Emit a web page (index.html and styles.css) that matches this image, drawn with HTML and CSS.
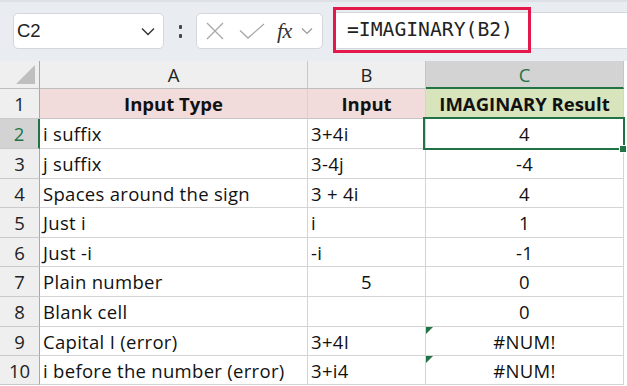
FILE: index.html
```html
<!DOCTYPE html>
<html>
<head>
<meta charset="utf-8">
<link rel="stylesheet" href="styles.css">
</head>
<body>
<div class="toolbar">
  <div class="namebox">
    <span class="nb-text">C2</span>
    <svg class="nb-chev" width="14" height="9" viewBox="0 0 14 9"><path d="M1 1.5 L7 7.5 L13 1.5" fill="none" stroke="#333" stroke-width="1.4"/></svg>
  </div>
  <div class="dots"><span></span><span></span></div>
  <div class="fxbox">
    <svg width="18" height="18" viewBox="0 0 18 18"><path d="M1 1 L17 17 M17 1 L1 17" stroke="#a8a8a8" stroke-width="1.3" fill="none"/></svg>
    <svg width="26" height="16" viewBox="0 0 26 16"><path d="M1 7.5 L9 15 L25 1" stroke="#a8a8a8" stroke-width="1.3" fill="none"/></svg>
    <span class="fx">fx</span>
    <svg width="12" height="8" viewBox="0 0 12 8"><path d="M1 1.5 L6 6.5 L11 1.5" fill="none" stroke="#999" stroke-width="1.2"/></svg>
  </div>
  <div class="formula">
    <div class="fbox">=IMAGINARY(B2)</div>
  </div>
</div>
<div class="sheet">
  <div class="grid">
    <div class="corner"><span class="tri"></span></div>
    <div class="ch">A</div>
    <div class="ch">B</div>
    <div class="ch sel">C</div>

    <div class="rh">1</div>
    <div class="c hd pink">Input Type</div>
    <div class="c hd pink">Input</div>
    <div class="c hd green">IMAGINARY Result</div>

    <div class="rh sel">2</div>
    <div class="c">i suffix</div>
    <div class="c">3+4i</div>
    <div class="c ctr">4</div>

    <div class="rh">3</div>
    <div class="c">j suffix</div>
    <div class="c">3-4j</div>
    <div class="c ctr">-4</div>

    <div class="rh">4</div>
    <div class="c">Spaces around the sign</div>
    <div class="c">3 + 4i</div>
    <div class="c ctr">4</div>

    <div class="rh">5</div>
    <div class="c">Just i</div>
    <div class="c">i</div>
    <div class="c ctr">1</div>

    <div class="rh">6</div>
    <div class="c">Just -i</div>
    <div class="c">-i</div>
    <div class="c ctr">-1</div>

    <div class="rh">7</div>
    <div class="c">Plain number</div>
    <div class="c ctr">5</div>
    <div class="c ctr">0</div>

    <div class="rh">8</div>
    <div class="c">Blank cell</div>
    <div class="c"></div>
    <div class="c ctr">0</div>

    <div class="rh">9</div>
    <div class="c">Capital I (error)</div>
    <div class="c">3+4I</div>
    <div class="c ctr err">#NUM!</div>

    <div class="rh">10</div>
    <div class="c">i before the number (error)</div>
    <div class="c">3+i4</div>
    <div class="c ctr err">#NUM!</div>
  </div>
  <div class="selbox"></div>
  <div class="handle"></div>
</div>
</body>
</html>
```
FILE: styles.css
```css
* { box-sizing: border-box; }
html, body { margin: 0; padding: 0; }
body {
  width: 627px;
  height: 386px;
  overflow: hidden;
  background: #ffffff;
  font-family: "Open Sans", "Liberation Sans", sans-serif;
  color: #111;
}
.toolbar {
  height: 61px;
  background: #e9edf1;
  border-top: 2px solid #dde1e5;
  display: flex;
  align-items: flex-start;
  padding-left: 13px;
}
.namebox {
  margin-top: 11px;
  width: 151px;
  height: 36px;
  background: #fff;
  border: 1px solid #d3d6da;
  border-radius: 5px;
  display: flex;
  align-items: center;
  justify-content: space-between;
  padding: 0 8px 0 3px;
}
.nb-text {
  font-family: "Liberation Sans", Arial, sans-serif;
  font-size: 18.5px;
  color: #222;
}
.nb-chev { margin-top: 1px; }
.dots {
  width: 32px;
  height: 36px;
  margin-top: 11px;
  display: flex;
  flex-direction: column;
  align-items: center;
  justify-content: center;
  gap: 5px;
}
.dots span {
  width: 3px;
  height: 4px;
  background: #444;
  border-radius: 1px;
}
.fxbox {
  margin-top: 11px;
  width: 127px;
  height: 36px;
  background: #fff;
  border: 1px solid #d3d6da;
  border-radius: 5px;
  display: flex;
  align-items: center;
  padding-left: 9px;
}
.fxbox svg:nth-child(1) { margin-right: 15px; }
.fxbox svg:nth-child(2) { margin-right: 12px; }
.fx {
  font-family: "Liberation Serif", "DejaVu Serif", serif;
  font-style: italic;
  font-size: 22px;
  color: #333;
  margin-right: 9px;
  letter-spacing: -0.5px;
}
.formula {
  margin-left: 10px;
  flex: 1;
  margin-top: 10px;
  height: 37px;
  background: #fff;
  border: 1px solid #d3d6da;
  border-right: none;
  border-radius: 5px 0 0 5px;
  position: relative;
}
.fbox {
  position: absolute;
  left: -1px;
  top: -6px;
  width: 198px;
  height: 46px;
  border: 3px solid #e3194b;
  font-family: "DejaVu Sans Mono", "Liberation Mono", monospace;
  font-size: 19.7px;
  color: #222;
  padding-left: 11px;
  line-height: 40px;
}
.sheet {
  position: relative;
  height: 325px;
}
.grid {
  display: grid;
  grid-template-columns: 40px 268px 118px 198px;
  grid-template-rows: 28px 30px 30px 30px 29px 30px 29px 30px 30px 29px 29px;
  width: 624px;
}
.corner {
  background: #efefef;
  border-right: 1px solid #a9a9a9;
  border-bottom: 1px solid #bdbdbd;
  position: relative;
}
.tri {
  position: absolute;
  right: 4px;
  bottom: 4px;
  width: 0;
  height: 0;
  border-left: 19px solid transparent;
  border-bottom: 19px solid #bfbfbf;
}
.ch {
  background: #efefef;
  border-right: 1px solid #c6c6c6;
  border-bottom: 1px solid #bdbdbd;
  display: flex;
  align-items: center;
  justify-content: center;
  font-size: 18.5px;
  color: #222;
}
.ch.sel {
  background: #d3d3d3;
  color: #217346;
  border-bottom: 2px solid #217346;
}
.rh {
  background: #efefef;
  border-right: 1px solid #a9a9a9;
  border-bottom: 1px solid #c9c9c9;
  display: flex;
  align-items: center;
  justify-content: center;
  font-size: 18.5px;
  color: #222;
}
.rh.sel {
  background: #d3d3d3;
  color: #217346;
  border-right: 2px solid #217346;
}
.c {
  border-right: 1px solid #d4d4d4;
  border-bottom: 1px solid #d4d4d4;
  display: flex;
  align-items: center;
  padding-left: 3px;
  font-size: 18.5px;
  letter-spacing: 0.3px;
  color: #111;
  white-space: nowrap;
  position: relative;
}
.c.ctr { justify-content: center; padding-left: 0; }
.c.hd {
  justify-content: center;
  font-weight: 700;
  padding-left: 0;
  letter-spacing: 0;
  border-bottom-color: #c4c4c4;
}
.pink { background: #f2dcdb; }
.green { background: #d8e4bc; }
.err::before {
  content: "";
  position: absolute;
  left: 0;
  top: 0;
  width: 0;
  height: 0;
  border-top: 7px solid #217346;
  border-right: 7px solid transparent;
}
.selbox {
  position: absolute;
  left: 423px;
  top: 56px;
  width: 202px;
  height: 33px;
  border: 2px solid #217346;
}
.handle {
  position: absolute;
  left: 619px;
  top: 84px;
  width: 8px;
  height: 8px;
  background: #217346;
  border: 1px solid #fff;
}
```
